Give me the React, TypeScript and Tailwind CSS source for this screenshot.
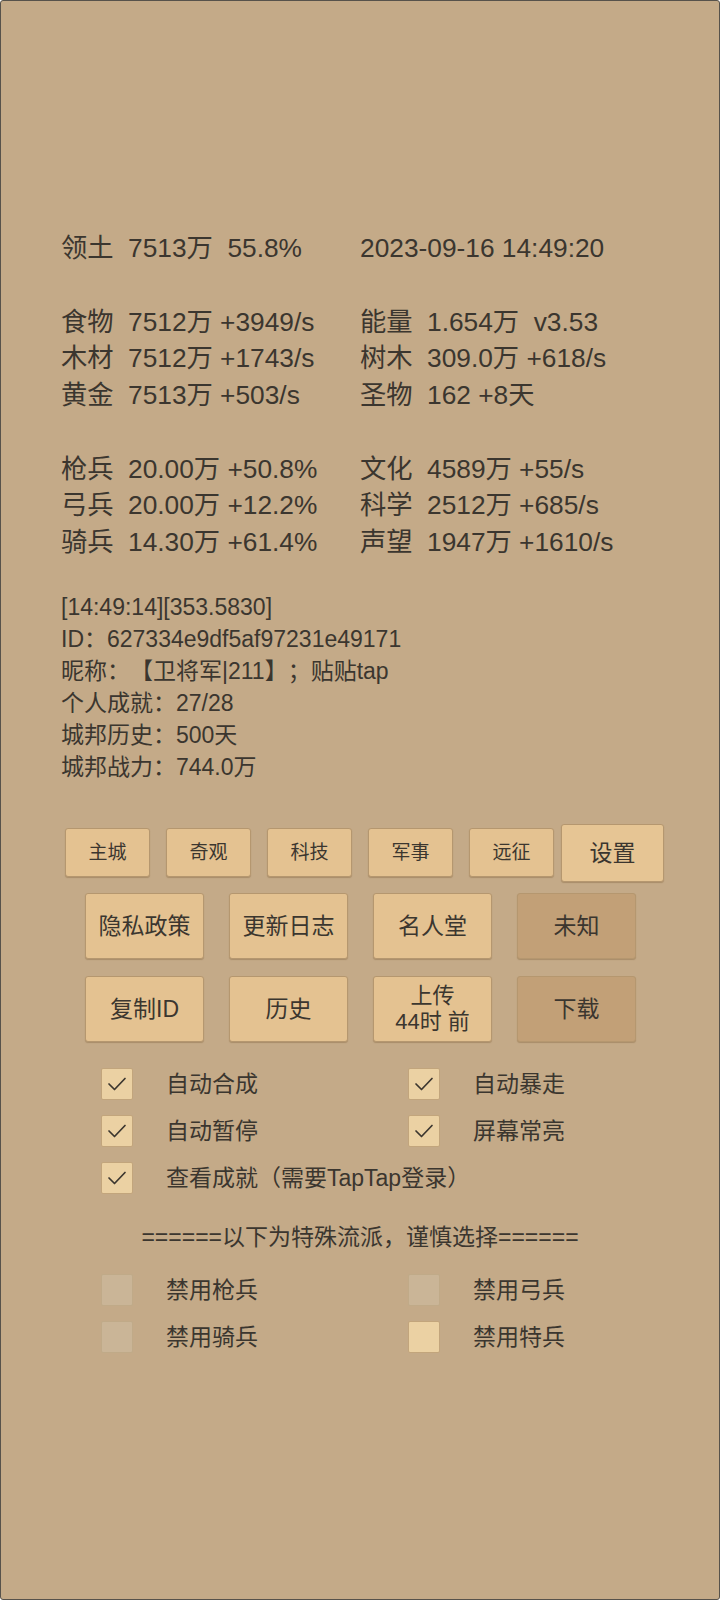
import React from 'react';

const FONT = { fontFamily: '"Liberation Sans", "Noto Sans CJK SC", sans-serif' };

type Stat = { label: string; value: string };

const leftStats: (Stat | null)[] = [
  { label: '领土', value: '7513万  55.8%' },
  null,
  { label: '食物', value: '7512万 +3949/s' },
  { label: '木材', value: '7512万 +1743/s' },
  { label: '黄金', value: '7513万 +503/s' },
  null,
  { label: '枪兵', value: '20.00万 +50.8%' },
  { label: '弓兵', value: '20.00万 +12.2%' },
  { label: '骑兵', value: '14.30万 +61.4%' },
];

const rightStats: (Stat | string | null)[] = [
  '2023-09-16 14:49:20',
  null,
  { label: '能量', value: '1.654万  v3.53' },
  { label: '树木', value: '309.0万 +618/s' },
  { label: '圣物', value: '162 +8天' },
  null,
  { label: '文化', value: '4589万 +55/s' },
  { label: '科学', value: '2512万 +685/s' },
  { label: '声望', value: '1947万 +1610/s' },
];

const infoLines = [
  '[14:49:14][353.5830]',
  'ID：627334e9df5af97231e49171',
  '昵称：【卫将军|211】；贴贴tap',
  '个人成就：27/28',
  '城邦历史：500天',
  '城邦战力：744.0万',
];

function StatLine({ item }: { item: Stat | string | null }) {
  if (item === null) return <div className="h-[36.75px]" />;
  if (typeof item === 'string') return <div className="h-[36.75px] whitespace-pre">{item}</div>;
  return (
    <div className="h-[36.75px] flex whitespace-pre">
      <span className="w-[67px]">{item.label}</span>
      <span>{item.value}</span>
    </div>
  );
}

function Btn({ children, dark, className }: { children: React.ReactNode; dark?: boolean; className: string }) {
  return (
    <div
      className={`flex items-center justify-center text-center rounded-[3px] border border-[#b5976f] shadow-[0_1px_1px_rgba(120,90,50,0.35)] ${
        dark ? 'bg-[#c2a077]' : 'bg-[#e4c291]'
      } ${className}`}
    >
      {children}
    </div>
  );
}

function Check({ label, checked, disabled }: { label: string; checked?: boolean; disabled?: boolean }) {
  return (
    <div className="flex items-center h-[47px]">
      <div
        className={`w-[32px] h-[32px] rounded-[2px] border flex items-center justify-center ${
          disabled ? 'bg-[#cab597] border-[#c0aa88]' : 'bg-[#ebd1a3] border-[#c2a57c]'
        }`}
      >
        {checked && (
          <svg width="20" height="16" viewBox="0 0 20 16" fill="none">
            <path d="M2 8 L7.5 13.5 L18 2.5" stroke="#3b362f" strokeWidth="1.7" strokeLinecap="round" strokeLinejoin="round" />
          </svg>
        )}
      </div>
      <span className="ml-[33px] text-[23px]">{label}</span>
    </div>
  );
}

export default function App() {
  return (
    <div
      style={FONT}
      className="w-[720px] h-[1600px] bg-[#c4aa88] border border-[#57524b] rounded-[3px] text-[#3b362f] overflow-hidden [text-spacing-trim:space-all]"
    >
      {/* stats */}
      <div className="pt-[229px] pl-[60px] grid grid-cols-[299px_1fr] text-[26.3px] leading-[36.75px]">
        <div>
          {leftStats.map((s, i) => (
            <StatLine key={i} item={s} />
          ))}
        </div>
        <div>
          {rightStats.map((s, i) => (
            <StatLine key={i} item={s} />
          ))}
        </div>
      </div>

      {/* info */}
      <div className="mt-[30px] pl-[60px] text-[23px] leading-[32px]">
        {infoLines.map((l) => (
          <div key={l}>{l}</div>
        ))}
      </div>

      {/* tabs */}
      <div className="mt-[41px] pl-[64px] flex items-center gap-[16px] text-[19px]">
        {['主城', '奇观', '科技', '军事', '远征'].map((t) => (
          <Btn key={t} className="w-[85px] h-[49px]">
            {t}
          </Btn>
        ))}
        <Btn className="-ml-[9px] w-[103px] h-[58px] text-[23px] bg-[#e6c594]">设置</Btn>
      </div>

      <div className="mt-[11px] pl-[84px] grid grid-cols-[119px_119px_119px_119px] gap-x-[25px] gap-y-[17px] text-[23px]">
        <Btn className="h-[66px]">隐私政策</Btn>
        <Btn className="h-[66px]">更新日志</Btn>
        <Btn className="h-[66px]">名人堂</Btn>
        <Btn dark className="h-[66px]">未知</Btn>
        <Btn className="h-[66px]">复制ID</Btn>
        <Btn className="h-[66px]">历史</Btn>
        <Btn className="h-[66px] leading-[26px] text-[22px]">
          <div>
            上传
            <br />
            44时 前
          </div>
        </Btn>
        <Btn dark className="h-[66px]">下载</Btn>
      </div>

      {/* options */}
      <div className="mt-[19px] pl-[100px] grid grid-cols-[307px_1fr]">
        <Check label="自动合成" checked />
        <Check label="自动暴走" checked />
        <Check label="自动暂停" checked />
        <Check label="屏幕常亮" checked />
        <div className="col-span-2">
          <Check label="查看成就（需要TapTap登录）" checked />
        </div>
      </div>

      <div className="mt-[15px] h-[40px] flex items-center justify-center text-[23px]">
        ======以下为特殊流派，谨慎选择======
      </div>

      <div className="mt-[10px] pl-[100px] grid grid-cols-[307px_1fr]">
        <Check label="禁用枪兵" disabled />
        <Check label="禁用弓兵" disabled />
        <Check label="禁用骑兵" disabled />
        <Check label="禁用特兵" />
      </div>
    </div>
  );
}
